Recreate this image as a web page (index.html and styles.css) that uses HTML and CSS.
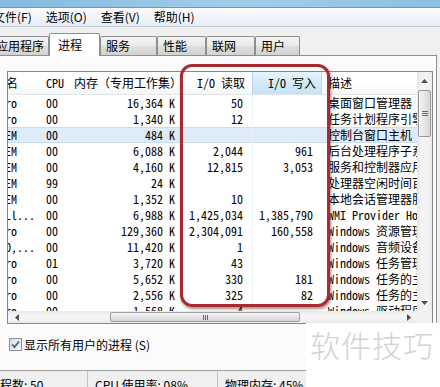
FILE: index.html
```html
<!DOCTYPE html>
<html lang="zh-CN">
<head>
<meta charset="utf-8">
<title>Windows 任务管理器</title>
<link rel="stylesheet" href="styles.css">
</head>
<body>
<div class="win">
  <div class="titlebar"></div>
  <div class="menubar">
    <span class="menu">文件(F)</span>
    <span class="menu">选项(O)</span>
    <span class="menu">查看(V)</span>
    <span class="menu">帮助(H)</span>
  </div>
  <div class="tabstrip">
    <div class="tab t-apps">应用程序</div>
    <div class="tab active t-proc">进程</div>
    <div class="tab t-svc">服务</div>
    <div class="tab t-perf">性能</div>
    <div class="tab t-net">联网</div>
    <div class="tab t-users">用户</div>
  </div>
  <div class="panel">
    <div class="list">
      <div class="view">
        <div class="hdr">
          <div class="c user">用户名</div>
          <div class="c cpu">CPU</div>
          <div class="c mem">内存（专用工作集）</div>
          <div class="c ior">I/O 读取</div>
          <div class="c iow hot">I/O 写入</div>
          <div class="c desc">描述</div>
        </div>
        <div class="row"><div class="c user">Castro</div><div class="c cpu">00</div><div class="c mem">16,364 K</div><div class="c ior">50</div><div class="c iow"></div><div class="c desc">桌面窗口管理器</div></div>
        <div class="row"><div class="c user">Castro</div><div class="c cpu">00</div><div class="c mem">1,340 K</div><div class="c ior">12</div><div class="c iow"></div><div class="c desc">任务计划程序引擎</div></div>
        <div class="row sel"><div class="c user">SYSTEM</div><div class="c cpu">00</div><div class="c mem">484 K</div><div class="c ior"></div><div class="c iow"></div><div class="c desc">控制台窗口主机</div></div>
        <div class="row"><div class="c user">SYSTEM</div><div class="c cpu">00</div><div class="c mem">6,088 K</div><div class="c ior">2,044</div><div class="c iow">961</div><div class="c desc">后台处理程序子系统应用程序</div></div>
        <div class="row"><div class="c user">SYSTEM</div><div class="c cpu">00</div><div class="c mem">4,160 K</div><div class="c ior">12,815</div><div class="c iow">3,053</div><div class="c desc">服务和控制器应用程序</div></div>
        <div class="row"><div class="c user">SYSTEM</div><div class="c cpu">99</div><div class="c mem">24 K</div><div class="c ior"></div><div class="c iow"></div><div class="c desc">处理器空闲时间百分比</div></div>
        <div class="row"><div class="c user">SYSTEM</div><div class="c cpu">00</div><div class="c mem">1,352 K</div><div class="c ior">10</div><div class="c iow"></div><div class="c desc">本地会话管理器服务</div></div>
        <div class="row"><div class="c user">LOCALl...</div><div class="c cpu">00</div><div class="c mem">6,988 K</div><div class="c ior">1,425,034</div><div class="c iow">1,385,790</div><div class="c desc">WMI Provider Host</div></div>
        <div class="row"><div class="c user">Castro</div><div class="c cpu">00</div><div class="c mem">129,360 K</div><div class="c ior">2,304,091</div><div class="c iow">160,558</div><div class="c desc">Windows 资源管理器</div></div>
        <div class="row"><div class="c user">NETWO,...</div><div class="c cpu">00</div><div class="c mem">11,420 K</div><div class="c ior">1</div><div class="c iow"></div><div class="c desc">Windows 音频设备图形隔离</div></div>
        <div class="row"><div class="c user">Castro</div><div class="c cpu">01</div><div class="c mem">3,720 K</div><div class="c ior">43</div><div class="c iow"></div><div class="c desc">Windows 任务管理器</div></div>
        <div class="row"><div class="c user">Castro</div><div class="c cpu">00</div><div class="c mem">5,652 K</div><div class="c ior">330</div><div class="c iow">181</div><div class="c desc">Windows 任务的主机进程</div></div>
        <div class="row"><div class="c user">Castro</div><div class="c cpu">00</div><div class="c mem">2,556 K</div><div class="c ior">325</div><div class="c iow">82</div><div class="c desc">Windows 任务的主机进程</div></div>
        <div class="row"><div class="c user">Castro</div><div class="c cpu">00</div><div class="c mem">1,568 K</div><div class="c ior">4</div><div class="c iow"></div><div class="c desc">Windows 驱动程序基础</div></div>
      </div>
      <div class="vs">
        <div class="sbtn"><svg width="7" height="4" viewBox="0 0 7 4"><polygon points="0,4 3.5,0 7,4" fill="#4f4f4f"/></svg></div>
        <div class="vthumb"><span class="grip-h"></span><span class="grip-h"></span><span class="grip-h"></span></div>
        <div class="vtrack"></div>
        <div class="sbtn"><svg width="7" height="4" viewBox="0 0 7 4"><polygon points="0,0 7,0 3.5,4" fill="#4f4f4f"/></svg></div>
      </div>
      <div class="hs">
        <div class="hbtn"><svg width="4" height="7" viewBox="0 0 4 7"><polygon points="4,0 4,7 0,3.5" fill="#4f4f4f"/></svg></div>
        <div class="hgap"></div>
        <div class="hthumb"><span class="grip-v"></span><span class="grip-v"></span><span class="grip-v"></span></div>
        <div class="htrack"></div>
        <div class="hbtn"><svg width="4" height="7" viewBox="0 0 4 7"><polygon points="0,0 4,3.5 0,7" fill="#4f4f4f"/></svg></div>
      </div>
      <div class="corner"></div>
    </div>
    <label class="opt">
      <span class="box"><svg width="11" height="11" viewBox="0 0 11 11"><path d="M2 5.5 L4.5 8.2 L9 2.5" fill="none" stroke="#4a5f86" stroke-width="1.8"/></svg></span>
      <span>显示所有用户的进程 (S)</span>
    </label>
  </div>
  <div class="status">
    <div class="si s1">进程数: 50</div>
    <div class="si s2">CPU 使用率: 08%</div>
    <div class="si s3">物理内存: 45%</div>
  </div>
  <div class="mark"></div>
  <div class="wm">软件技巧</div>
</div>
</body>
</html>
```

FILE: styles.css
```css
* { box-sizing: border-box; }
html, body { margin: 0; padding: 0; }
body {
  width: 440px;
  height: 387px;
  overflow: hidden;
  background: #fff;
  font-family: "Noto Sans CJK SC", "Noto Sans", sans-serif;
  font-size: 12px;
  color: #000;
}
.win {
  position: relative;
  width: 440px;
  height: 387px;
  overflow: hidden;
  background: #f0f0f0;
}
.titlebar {
  height: 8px;
  background: linear-gradient(90deg, #84bbdf, #a2cde9 55%, #8cc0e1);
  border-bottom: 1px solid #6f97b6;
}
.menubar {
  display: flex;
  align-items: center;
  height: 19px;
  margin-left: -14px;
  background: linear-gradient(#fbfcfe, #e8eef6);
  border-bottom: 1px solid #c4ccd8;
}
.menu {
  padding: 0 7px;
  line-height: 18px;
  white-space: nowrap;
}
.tabstrip {
  display: flex;
  align-items: flex-end;
  height: 28px;
}
.tab {
  flex: none;
  height: 19px;
  line-height: 17px;
  padding-left: 5px;
  border: 1px solid #8e8f8f;
  border-bottom: none;
  border-radius: 2px 2px 0 0;
  background: linear-gradient(#f3f3f3, #ebebeb 45%, #dddddd 55%, #d2d2d2);
  white-space: nowrap;
  overflow: hidden;
}
.tab.active {
  position: relative;
  z-index: 1;
  height: 23px;
  line-height: 21px;
  margin-bottom: -1px;
  padding-left: 8px;
  background: #fff;
}
.t-apps { width: 59px; margin-left: -10px; }
.t-proc { width: 51px; }
.t-svc { width: 57px; }
.t-perf { width: 49px; }
.t-net { width: 49px; }
.t-users { width: 45px; }

.panel {
  width: 437px;
  height: 316px;
  background: #fbfbfb;
  border-top: 1px solid #8e8f8f;
  border-right: 1px solid #8e8f8f;
  border-bottom: 1px solid #a0a0a0;
  padding-top: 15px;
}
.list {
  margin-left: 7px;
  width: 426px;
  height: 253px;
  border: 1px solid #828790;
  display: grid;
  grid-template-columns: 1fr 15px;
  grid-template-rows: 1fr 12px;
  background: #fff;
}
.view {
  overflow: hidden;
  background: #fff;
  font-family: "Noto Sans Mono CJK SC", "Liberation Mono", "Noto Sans CJK SC", monospace;
  font-size: 12px;
}
.hdr {
  display: flex;
  height: 23px;
  line-height: 22px;
  background: linear-gradient(#fff, #fff 50%, #f5f6f7);
  border-bottom: 1px solid #e2e5e9;
}
.row {
  display: flex;
  height: 16px;
  line-height: 16px;
}
.row.sel {
  background: #dfebf8;
  box-shadow: inset 0 1px #c9ddf1, inset 0 -1px #c9ddf1;
}
.c {
  flex: none;
  overflow: hidden;
  white-space: nowrap;
}
.user { width: 32px; text-indent: -27px; }
.hdr .user { text-indent: -26px; }
.cpu { width: 34px; padding-left: 6px; }
.mem { width: 107px; text-align: right; padding-right: 6px; }
.ior { width: 71px; text-align: right; padding-right: 9px; }
.hdr .ior { padding-right: 7px; }
.iow { width: 70px; text-align: right; padding-right: 9px; border-left: 1px solid #eef2f6; }
.hdr .iow { padding-right: 5px; }
.hot {
  background: linear-gradient(#e8f4fc, #d4eaf8 50%, #c6e3f6);
  border-left: 1px solid #b7d9f0;
  border-right: 1px solid #b7d9f0;
}
.desc { width: 200px; padding-left: 6px; }

.vs {
  display: flex;
  flex-direction: column;
  background: linear-gradient(90deg, #e4e4e4, #f3f3f3 25%, #f3f3f3 75%, #e9e9e9);
}
.sbtn {
  height: 17px;
  display: flex;
  align-items: center;
  justify-content: center;
}
.vthumb {
  height: 47px;
  margin: 1px 1px 0;
  border: 1px solid #9a9a9a;
  border-radius: 2px;
  background: linear-gradient(90deg, #f4f4f4, #e6e6e6 50%, #d6d6d6);
  display: flex;
  flex-direction: column;
  align-items: center;
  justify-content: center;
  gap: 1px;
}
.grip-h { width: 6px; height: 1px; background: #6a6a6a; }
.vtrack { flex: 1; }

.hs {
  display: flex;
  align-items: stretch;
  background: linear-gradient(#e9e9e9, #f4f4f4 30%, #f4f4f4 70%, #e9e9e9);
}
.hbtn {
  width: 17px;
  display: flex;
  align-items: center;
  justify-content: center;
}
.hgap { width: 85px; }
.hthumb {
  width: 190px;
  margin: 1px 0;
  border: 1px solid #a0a0a0;
  border-radius: 2px;
  background: linear-gradient(#f3f3f3, #e4e4e4 50%, #d4d4d4);
  display: flex;
  align-items: center;
  justify-content: center;
  gap: 1px;
}
.grip-v { width: 1px; height: 5px; background: #6a6a6a; }
.htrack { flex: 1; }
.corner { background: #f0f0f0; }

.opt {
  display: flex;
  align-items: center;
  gap: 2px;
  height: 14px;
  margin: 13px 0 0 9px;
  white-space: nowrap;
}
.box {
  width: 13px;
  height: 13px;
  border: 1px solid #8e8f8f;
  background: linear-gradient(135deg, #d9dde3, #f6f7f9);
  display: flex;
  align-items: center;
  justify-content: center;
}

.status {
  display: flex;
  height: 16px;
  overflow: hidden;
  margin-left: -15px;
  background: #f0f0f0;
}
.si {
  flex: none;
  padding-top: 6px;
  line-height: 16px;
  border-right: 1px solid #c4c4c4;
  white-space: nowrap;
}
.s1 { width: 103px; padding-left: 3px; }
.s2 { width: 130px; padding-left: 7px; }
.s3 { width: 90px; padding-left: 7px; }

.mark {
  position: absolute;
  left: 180px;
  top: 64px;
  width: 150px;
  height: 243px;
  border: 3px solid #a92b30;
  border-radius: 12px;
  box-shadow: 1px 2px 3px rgba(70, 0, 0, 0.45);
}
.wm {
  position: absolute;
  left: 306px;
  top: 323px;
  right: 0;
  bottom: 0;
  background: #fff;
  color: #d2d2d2;
  font-size: 30px;
  line-height: 30px;
  font-weight: 300;
  letter-spacing: 1px;
  padding: 6px 0 0 4px;
  white-space: nowrap;
}
```
